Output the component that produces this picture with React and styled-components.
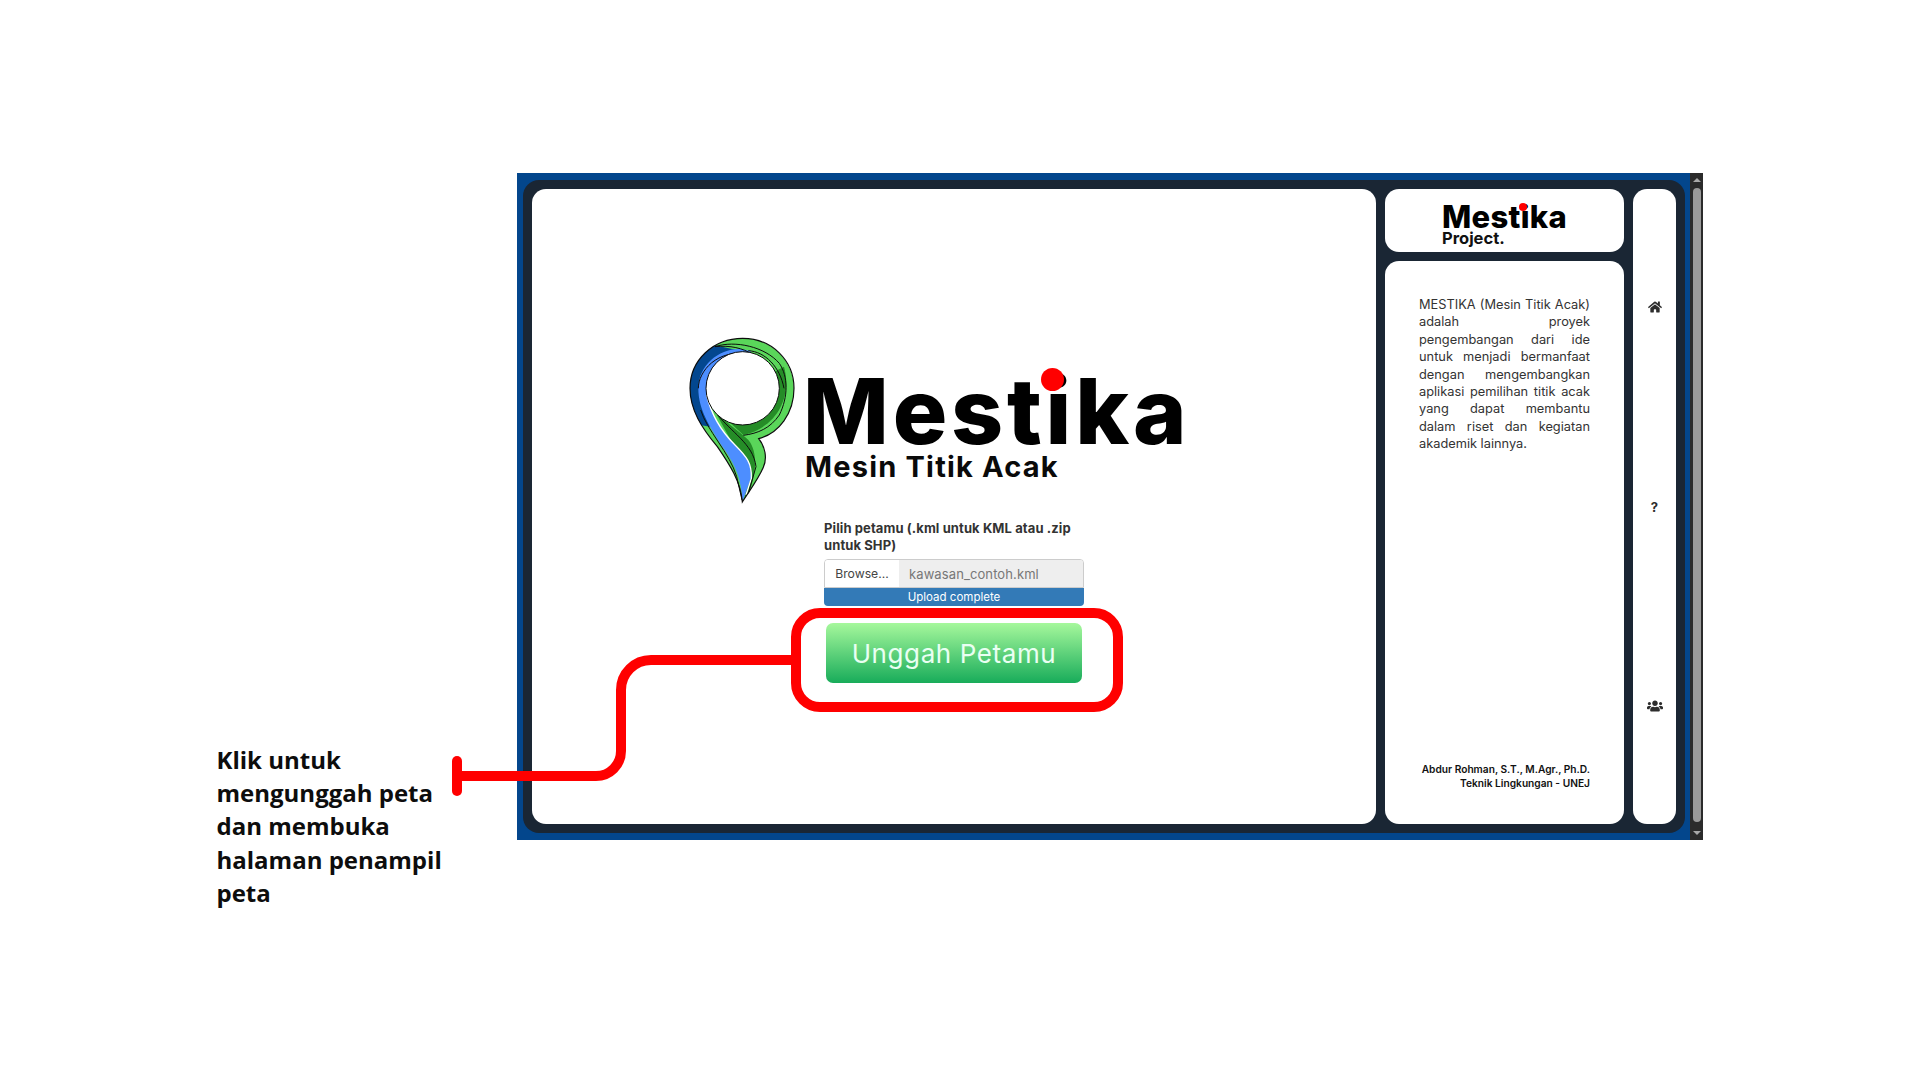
import React from "react";
import styled, { createGlobalStyle } from "styled-components";
import { FaHome, FaUsers } from "react-icons/fa";

const Global = createGlobalStyle`
  html, body { margin: 0; padding: 0; background: #fff; }
  body { font-family: Inter, "Noto Sans", sans-serif; overflow: hidden; }
`;

const Stage = styled.div`
  position: relative;
  width: 1920px;
  height: 1080px;
  box-sizing: border-box;
  padding: 173px 0 0 216.5px;
  display: flex;
  align-items: flex-start;
`;
const Caption = styled.p`
  width: 235px;
  margin: 570px 65.5px 0 0;
  font: 700 24px/33.2px "Open Sans", sans-serif;
  color: #0d0d0d;
`;
const Frame = styled.div`
  width: 1186px;
  height: 667px;
  display: flex;
  background: #03468c;
`;
const Shell = styled.div`
  flex: 1;
  box-sizing: border-box;
  margin: 7px 5px 7px 6px;
  padding: 9px;
  background: #1a2634;
  border-radius: 16px;
  display: flex;
  gap: 9px;
`;
const Card = styled.div`
  background: #fff;
  border-radius: 14px;
  box-sizing: border-box;
`;
const Main = styled(Card)`
  width: 844px;
  padding-top: 141px;
  display: flex;
  flex-direction: column;
  align-items: center;
`;
const LogoRow = styled.div`
  width: 548px;
  height: 180px;
  display: flex;
  align-items: flex-start;
`;
const LogoWords = styled.div`
  padding-top: 41px;
  display: flex;
  flex-direction: column;
`;
const WordWrap = styled.div`
  position: relative;
  width: max-content;
`;
const BigWord = styled.div`
  font-size: 91px;
  line-height: 80px;
  font-weight: 800;
  letter-spacing: 3.8px;
  color: #000;
`;
const Dot = styled.span`
  position: absolute;
  left: ${(p) => p.$x}px;
  top: ${(p) => p.$y}px;
  width: ${(p) => p.$d}px;
  height: ${(p) => p.$d}px;
  border-radius: 50%;
  background: #f00;
`;
const SubWord = styled.div`
  padding-left: 2px;
  font-size: 29px;
  line-height: 32px;
  font-weight: 700;
  letter-spacing: 1.2px;
  color: #0a0a0a;
`;
const Form = styled.div`
  width: 260px;
  margin-top: 10px;
`;
const Label = styled.div`
  font-size: 13px;
  line-height: 17px;
  font-weight: 700;
  letter-spacing: 0.1px;
  color: #333;
  margin-bottom: 5px;
`;
const FileRow = styled.div`
  height: 29px;
  display: flex;
  box-sizing: border-box;
  border: 1px solid #ccc;
  border-radius: 4px 4px 0 0;
  overflow: hidden;
  font-size: 13px;
`;
const Browse = styled.div`
  width: 74px;
  background: #fff;
  color: #444;
  font-size: 12.2px;
  display: flex;
  align-items: center;
  justify-content: center;
`;
const FileName = styled.div`
  flex: 1;
  background: #eee;
  color: #777;
  padding-left: 10px;
  display: flex;
  align-items: center;
  letter-spacing: 0.1px;
`;
const Progress = styled.div`
  height: 18px;
  background: #337ab7;
  border-radius: 0 0 4px 4px;
  color: #fff;
  font-size: 11.5px;
  line-height: 18px;
  text-align: center;
`;
const Upload = styled.button`
  display: block;
  width: 256px;
  height: 60px;
  margin: 17px auto 0;
  border: 0;
  border-radius: 7px;
  background: linear-gradient(#a6f89c, #18ac5a);
  color: #e9fff2;
  font: 400 26px Inter, sans-serif;
  letter-spacing: 0.6px;
`;
const SideColumn = styled.div`
  width: 239px;
  display: flex;
  flex-direction: column;
  gap: 9px;
`;
const BrandCard = styled(Card)`
  height: 63px;
  padding: 14px 0 0 57px;
`;
const BrandWord = styled.div`
  font-size: 31px;
  line-height: 27px;
  font-weight: 800;
  letter-spacing: 0.3px;
  color: #000;
`;
const BrandSub = styled.div`
  font-size: 16.5px;
  line-height: 17px;
  font-weight: 700;
  color: #111;
`;
const InfoCard = styled(Card)`
  flex: 1;
  padding: 35px 34px 34px;
  display: flex;
  flex-direction: column;
  justify-content: space-between;
`;
const About = styled.div`
  font-size: 12.8px;
  line-height: 17.4px;
  color: #333;
`;
const AboutLine = styled.div`
  white-space: nowrap;
  text-align: justify;
  text-align-last: ${(p) => (p.$last ? "left" : "justify")};
`;
const Credit = styled.div`
  font-size: 10.2px;
  line-height: 14px;
  font-weight: 600;
  color: #111;
  text-align: right;
  white-space: nowrap;
`;
const Nav = styled(Card)`
  width: 43px;
  padding: 108px 0;
  display: flex;
  flex-direction: column;
  justify-content: space-between;
  align-items: center;
  color: #2d2d2d;
`;
const NavItem = styled.div`
  height: 20px;
  display: flex;
  align-items: center;
  justify-content: center;
  font-size: 13px;
  font-weight: 700;
`;
const Scrollbar = styled.div`
  width: 13px;
  background: #2b2b2b;
  display: flex;
  flex-direction: column;
  align-items: center;
  padding: 5px 0;
  box-sizing: border-box;
`;
const Arrow = styled.span`
  width: 0;
  height: 0;
  border-left: 4px solid transparent;
  border-right: 4px solid transparent;
  ${(p) => (p.$down ? "border-top: 4px solid #a8a8a8;" : "border-bottom: 4px solid #a8a8a8;")}
`;
const Thumb = styled.div`
  width: 8px;
  flex: 1;
  margin: 6px 0 9px;
  background: #9b9b9b;
  border-radius: 4px;
`;
const Overlay = styled.svg`
  position: absolute;
  left: 0;
  top: 0;
  pointer-events: none;
`;

const OUTER =
  "M187 516C182 455 150 405 112 350C66 295 30 240 30 175C30 90 100 25 188 25C275 25 342 92 342 175C342 250 297 310 236 326C256 350 262 385 250 412C235 448 205 487 187 516Z";

const Pin = () => (
  <svg width="123" height="180" viewBox="0 0 369 540">
    <defs>
      <clipPath id="pinClip">
        <path d={OUTER} />
      </clipPath>
    </defs>
    <g clipPath="url(#pinClip)">
      <path d={OUTER} fill="#5ad65a" />
      <path d="M312 110C335 190 300 290 190 315L120 250L188 175Z" fill="#258c27" />
      <path d="M78 195C110 265 170 295 205 330C235 365 232 440 195 516L190 400Z" fill="#258c27" />
      <path d="M215 70L105 46C60 70 25 120 25 175C25 220 40 255 60 285L90 290L80 170Z" fill="#03478f" />
      <path
        d="M215 66C150 35 55 90 55 175C55 240 90 290 120 340C160 395 185 440 187 516L213 445C215 400 200 380 165 345C130 310 95 260 80 195Z"
        fill="#4d8eff"
      />
      <path d="M80 195C95 260 130 310 165 345C200 380 216 400 214 445L198 495" fill="none" stroke="#fff" strokeWidth="4" />
    </g>
    <g fill="none" stroke="#0c0c0c" strokeWidth="3">
      <path d="M105 50C165 30 255 50 298 100C325 140 325 200 298 255C270 295 235 310 190 316" />
      <path d="M205 62C255 65 300 110 312 175" />
      <path d="M55 175C55 125 110 55 210 72" />
      <path d="M62 240C80 300 150 370 170 440L186 510" />
      <path d="M110 250C150 305 220 340 228 410L205 490" />
      <path d="M105 50C150 45 190 55 215 72" />
      <circle cx="188" cy="175" r="110" fill="#fff" />
      <path d={OUTER} strokeWidth="3.5" />
    </g>
  </svg>
);

const ABOUT = [
  "MESTIKA (Mesin Titik Acak)",
  "adalah proyek",
  "pengembangan dari ide",
  "untuk menjadi bermanfaat",
  "dengan mengembangkan",
  "aplikasi pemilihan titik acak",
  "yang dapat membantu",
  "dalam riset dan kegiatan",
  "akademik lainnya.",
];

export default function App() {
  return (
    <Stage>
      <Global />
      <Caption>Klik untuk mengunggah peta dan membuka halaman penampil peta</Caption>
      <Frame>
        <Shell>
          <Main>
            <LogoRow>
              <Pin />
              <LogoWords>
                <WordWrap>
                  <BigWord>Mestika</BigWord>
                  <Dot $x={238} $y={-3} $d={23} />
                </WordWrap>
                <SubWord>Mesin Titik Acak</SubWord>
              </LogoWords>
            </LogoRow>
            <Form>
              <Label>Pilih petamu (.kml untuk KML atau .zip untuk SHP)</Label>
              <FileRow>
                <Browse>Browse...</Browse>
                <FileName>kawasan_contoh.kml</FileName>
              </FileRow>
              <Progress>Upload complete</Progress>
              <Upload>Unggah Petamu</Upload>
            </Form>
          </Main>
          <SideColumn>
            <BrandCard>
              <WordWrap>
                <BrandWord>Mestika</BrandWord>
                <Dot $x={77} $y={0} $d={8} />
              </WordWrap>
              <BrandSub>Project.</BrandSub>
            </BrandCard>
            <InfoCard>
              <About>
                {ABOUT.map((line, i) => (
                  <AboutLine key={line} $last={i === ABOUT.length - 1}>
                    {line}
                  </AboutLine>
                ))}
              </About>
              <Credit>
                Abdur Rohman, S.T., M.Agr., Ph.D.
                <br />
                Teknik Lingkungan - UNEJ
              </Credit>
            </InfoCard>
          </SideColumn>
          <Nav>
            <NavItem>
              <FaHome size={14} />
            </NavItem>
            <NavItem>?</NavItem>
            <NavItem>
              <FaUsers size={16} />
            </NavItem>
          </Nav>
        </Shell>
        <Scrollbar>
          <Arrow />
          <Thumb />
          <Arrow $down />
        </Scrollbar>
      </Frame>
      <Overlay width="1920" height="1080" viewBox="0 0 1920 1080" fill="none" stroke="#f00" strokeWidth="10">
        <rect x="796" y="613" width="322" height="94" rx="24" />
        <path d="M791 660H651A30 30 0 0 0 621 690V751A25 25 0 0 1 596 776H457" />
        <path d="M457 761V791" strokeLinecap="round" />
      </Overlay>
    </Stage>
  );
}
